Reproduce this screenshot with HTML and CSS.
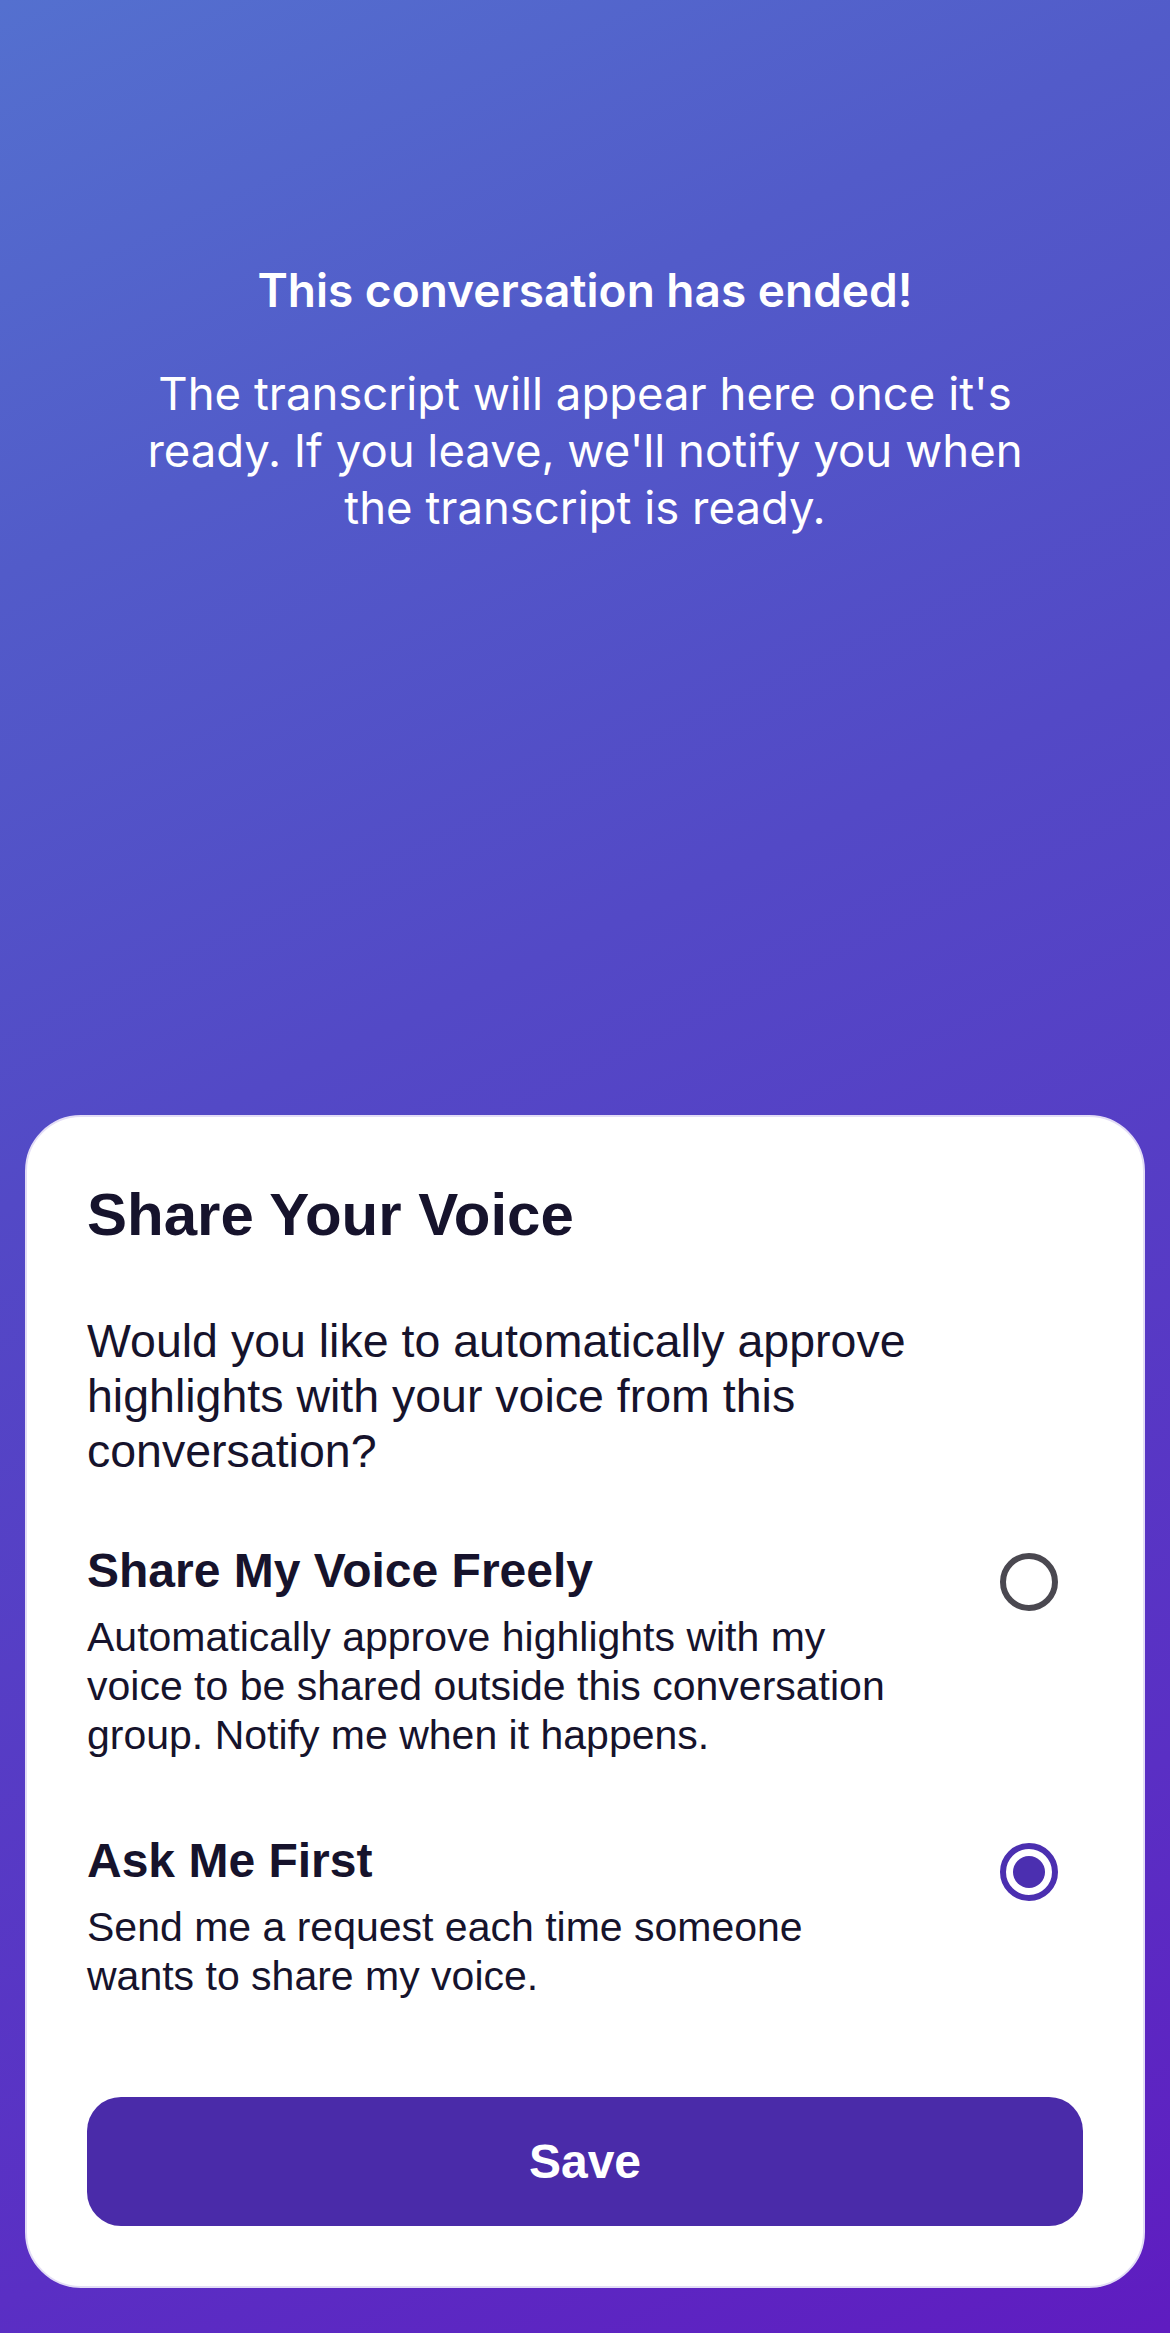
FILE: index.html
```html
<!DOCTYPE html>
<html lang="en">
<head>
<meta charset="utf-8">
<title>Conversation ended</title>
<link rel="stylesheet" href="styles.css">
</head>
<body>
<main class="screen">
  <section class="ended">
    <h1 class="ended-title">This conversation has ended!</h1>
    <p class="ended-text">The transcript will appear here once it's ready. If you leave, we'll notify you when the transcript is ready.</p>
  </section>
  <div class="spacer"></div>
  <section class="card">
    <h2 class="card-title">Share Your Voice</h2>
    <p class="card-question">Would you like to automatically approve highlights with your voice from this conversation?</p>
    <div class="options">
      <div class="option">
        <div class="option-text">
          <h3 class="option-title">Share My Voice Freely</h3>
          <p class="option-desc">Automatically approve highlights with my voice to be shared outside this conversation group. Notify me when it happens.</p>
        </div>
        <span class="radio"></span>
      </div>
      <div class="option">
        <div class="option-text">
          <h3 class="option-title">Ask Me First</h3>
          <p class="option-desc">Send me a request each time someone wants to share my voice.</p>
        </div>
        <span class="radio radio-on"><span class="radio-dot"></span></span>
      </div>
    </div>
    <button class="save" type="button">Save</button>
  </section>
</main>
</body>
</html>
```

FILE: styles.css
```css
* { box-sizing: border-box; }

html, body {
  margin: 0;
  padding: 0;
}

body {
  width: 1170px;
  height: 2333px;
  overflow: hidden;
  background: linear-gradient(155deg, #5470cf 0%, #525bc9 20%, #5349c6 42%, #5a2fc4 80%, #5f1cc0 100%);
}

.screen {
  display: flex;
  flex-direction: column;
  height: 2333px;
  padding: 0 25px 45px;
}

.ended {
  padding-top: 262px;
  display: flex;
  flex-direction: column;
  align-items: center;
  color: #ffffff;
  font-family: Inter, "Noto Sans", sans-serif;
  text-align: center;
}

.ended-title {
  margin: 0;
  font-size: 46px;
  font-weight: 600;
  line-height: 57px;
}

.ended-text {
  margin: 46px 0 0;
  width: 910px;
  font-size: 45.5px;
  font-weight: 400;
  line-height: 57px;
}

.spacer { flex: 1; }

.card {
  background: #ffffff;
  border: 2px solid #e3ddf6;
  border-radius: 56px;
  padding: 63px 60px 60px;
  font-family: "Liberation Sans", Arial, sans-serif;
  color: #16132c;
}

.card-title {
  margin: 0;
  font-size: 60px;
  font-weight: 700;
  line-height: 70px;
}

.card-question {
  margin: 64px 0 0;
  font-size: 46.5px;
  font-weight: 400;
  line-height: 55px;
}

.options {
  display: flex;
  flex-direction: column;
  gap: 73px;
  margin-top: 64px;
}

.option {
  display: flex;
  justify-content: space-between;
  align-items: flex-start;
}

.option-text {
  width: 820px;
}

.option-title {
  margin: 0;
  font-size: 48px;
  font-weight: 700;
  line-height: 56px;
}

.option-desc {
  margin: 14px 0 0;
  font-size: 41px;
  font-weight: 400;
  line-height: 49px;
}

.radio {
  flex: 0 0 58px;
  width: 58px;
  height: 58px;
  margin-top: 10px;
  margin-right: 25px;
  border: 6px solid #4a4850;
  border-radius: 50%;
  display: flex;
  align-items: center;
  justify-content: center;
}

.radio-on {
  border-color: #4b2fb0;
}

.radio-dot {
  width: 32px;
  height: 32px;
  border-radius: 50%;
  background: #4b2fb0;
}

.save {
  display: flex;
  align-items: center;
  justify-content: center;
  width: 100%;
  height: 129px;
  margin-top: 96px;
  border: none;
  border-radius: 34px;
  background: #4a2ba9;
  color: #ffffff;
  font-family: "Liberation Sans", Arial, sans-serif;
  font-size: 48px;
  font-weight: 700;
  padding: 0;
}
```
